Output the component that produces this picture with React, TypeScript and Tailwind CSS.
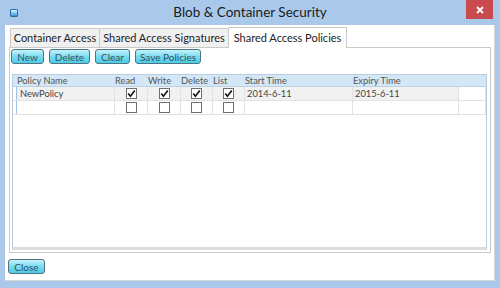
import React from 'react';

const font = { fontFamily: 'Lato, "Open Sans", sans-serif' };

const Check: React.FC<{ on?: boolean }> = ({ on }) => (
  <div className="w-[11px] h-[11px] bg-white border border-[#6f6f6f] flex items-center justify-center">
    {on && (
      <svg width="9" height="9" viewBox="0 0 9 9">
        <path d="M1.2 4.6 L3.4 7.2 L7.8 1.4" fill="none" stroke="#111" strokeWidth="1.6" />
      </svg>
    )}
  </div>
);

const Btn: React.FC<{ label: string; w: string }> = ({ label, w }) => (
  <button
    className={`${w} h-[15px] rounded-[3px] border border-[#4e7480] bg-gradient-to-b from-[#c4f2fb] via-[#78dcf0] to-[#4ccbe6] text-[10px] leading-none text-[#35515a] flex items-center justify-center`}
  >
    {label}
  </button>
);

const cols = [
  { label: 'Policy Name', w: 'w-[98px]' },
  { label: 'Read', w: 'w-[33px]' },
  { label: 'Write', w: 'w-[33px]' },
  { label: 'Delete', w: 'w-[32px]' },
  { label: 'List', w: 'w-[32px]' },
  { label: 'Start Time', w: 'w-[108px]' },
  { label: 'Expiry Time', w: 'w-[106px]' },
];

const rows = [
  { name: 'NewPolicy', checks: [true, true, true, true], start: '2014-6-11', expiry: '2015-6-11', bg: 'bg-[#f1f1f1]' },
  { name: '', checks: [false, false, false, false], start: '', expiry: '', bg: 'bg-white' },
];

export default function App() {
  return (
    <div className="w-[500px] h-[288px] bg-[#aac9ea] flex flex-col overflow-hidden" style={font}>
      {/* Title bar */}
      <div className="h-[25px] flex items-center relative shrink-0">
        <div className="ml-[10px] w-[8px] h-[8px] rounded-[1px] bg-gradient-to-b from-[#dff4ff] to-[#2a8fd6] border border-[#2c6fa8]" />
        <div className="flex-1 text-center text-[13.5px] text-[#1b1b1b] pr-[18px]">Blob &amp; Container Security</div>
        <div className="absolute top-0 right-[7px] w-[27px] h-[19px] bg-[#c94a4c] flex items-center justify-center">
          <svg width="8" height="8" viewBox="0 0 8 8">
            <path d="M1 1 L7 7 M7 1 L1 7" stroke="#fff" strokeWidth="1.8" />
          </svg>
        </div>
      </div>

      {/* Body */}
      <div className="mx-[5px] mb-[7px] flex-1 bg-white border-r border-b border-[#d6d6d6] flex flex-col">
        {/* Tabs */}
        <div className="flex items-end h-[22px] pl-[5px] shrink-0">
          <div className="w-[90px] h-[19px] bg-[#f0f0f0] border border-[#cacaca] border-b-0 text-[11px] text-[#222] flex items-center justify-center">Container Access</div>
          <div className="w-[129px] h-[19px] bg-[#f0f0f0] border border-l-0 border-[#cacaca] border-b-0 text-[11px] text-[#222] flex items-center justify-center">Shared Access Signatures</div>
          <div className="w-[118px] h-[21px] bg-white border border-l-0 border-[#cacaca] border-b-0 text-[11px] text-[#222] flex items-center justify-center -mb-[1px] relative z-10">Shared Access Policies</div>
        </div>

        {/* Panel */}
        <div className="ml-[4px] mr-[3px] h-[206px] border border-[#cacaca] flex flex-col shrink-0">
          <div className="flex gap-[5px] pl-[1px] pt-[1px]">
            <Btn label="New" w="w-[33px]" />
            <Btn label="Delete" w="w-[41px]" />
            <Btn label="Clear" w="w-[35px]" />
            <Btn label="Save Policies" w="w-[66px]" />
          </div>

          {/* Grid */}
          <div className="ml-[2px] mr-[3px] mt-[10px] flex-1 mb-[2px] border border-[#b7cde3] bg-white border-b-[3px] border-b-[#dcdcdc]">
            <div className="flex h-[12px] bg-[#d3e7f6] border-b border-[#bcd3e6] text-[9.3px] text-[#555] leading-none">
              <div className="w-[3px]" />
              {cols.map(c => (
                <div key={c.label} className={`${c.w} flex items-center pl-[1px]`}>{c.label}</div>
              ))}
            </div>
            {rows.map((r, i) => (
              <div key={i} className={`flex h-[14px] border-b border-[#e2e2e2] text-[9.3px] text-[#444] leading-none`}>
                <div className="w-[3px] bg-white" />
                <div className={`w-[98px] ${r.bg} flex items-center pl-[3px] border-l border-[#9fc4e6]`}>{r.name}</div>
                {r.checks.map((c, j) => (
                  <div key={j} className={`${cols[j + 1].w} ${r.bg} border-l border-[#e2e2e2] flex items-center justify-center`}>
                    <Check on={c} />
                  </div>
                ))}
                <div className={`w-[108px] ${r.bg} border-l border-[#e2e2e2] flex items-center pl-[2px]`}>{r.start}</div>
                <div className={`w-[106px] ${r.bg} border-l border-[#e2e2e2] flex items-center pl-[2px]`}>{r.expiry}</div>
                <div className="flex-1 bg-white border-l border-r border-[#e2e2e2]" />
              </div>
            ))}
          </div>
        </div>

        {/* Footer */}
        <div className="flex-1 flex items-center pl-[3px]">
          <Btn label="Close" w="w-[37px]" />
        </div>
      </div>
    </div>
  );
}
